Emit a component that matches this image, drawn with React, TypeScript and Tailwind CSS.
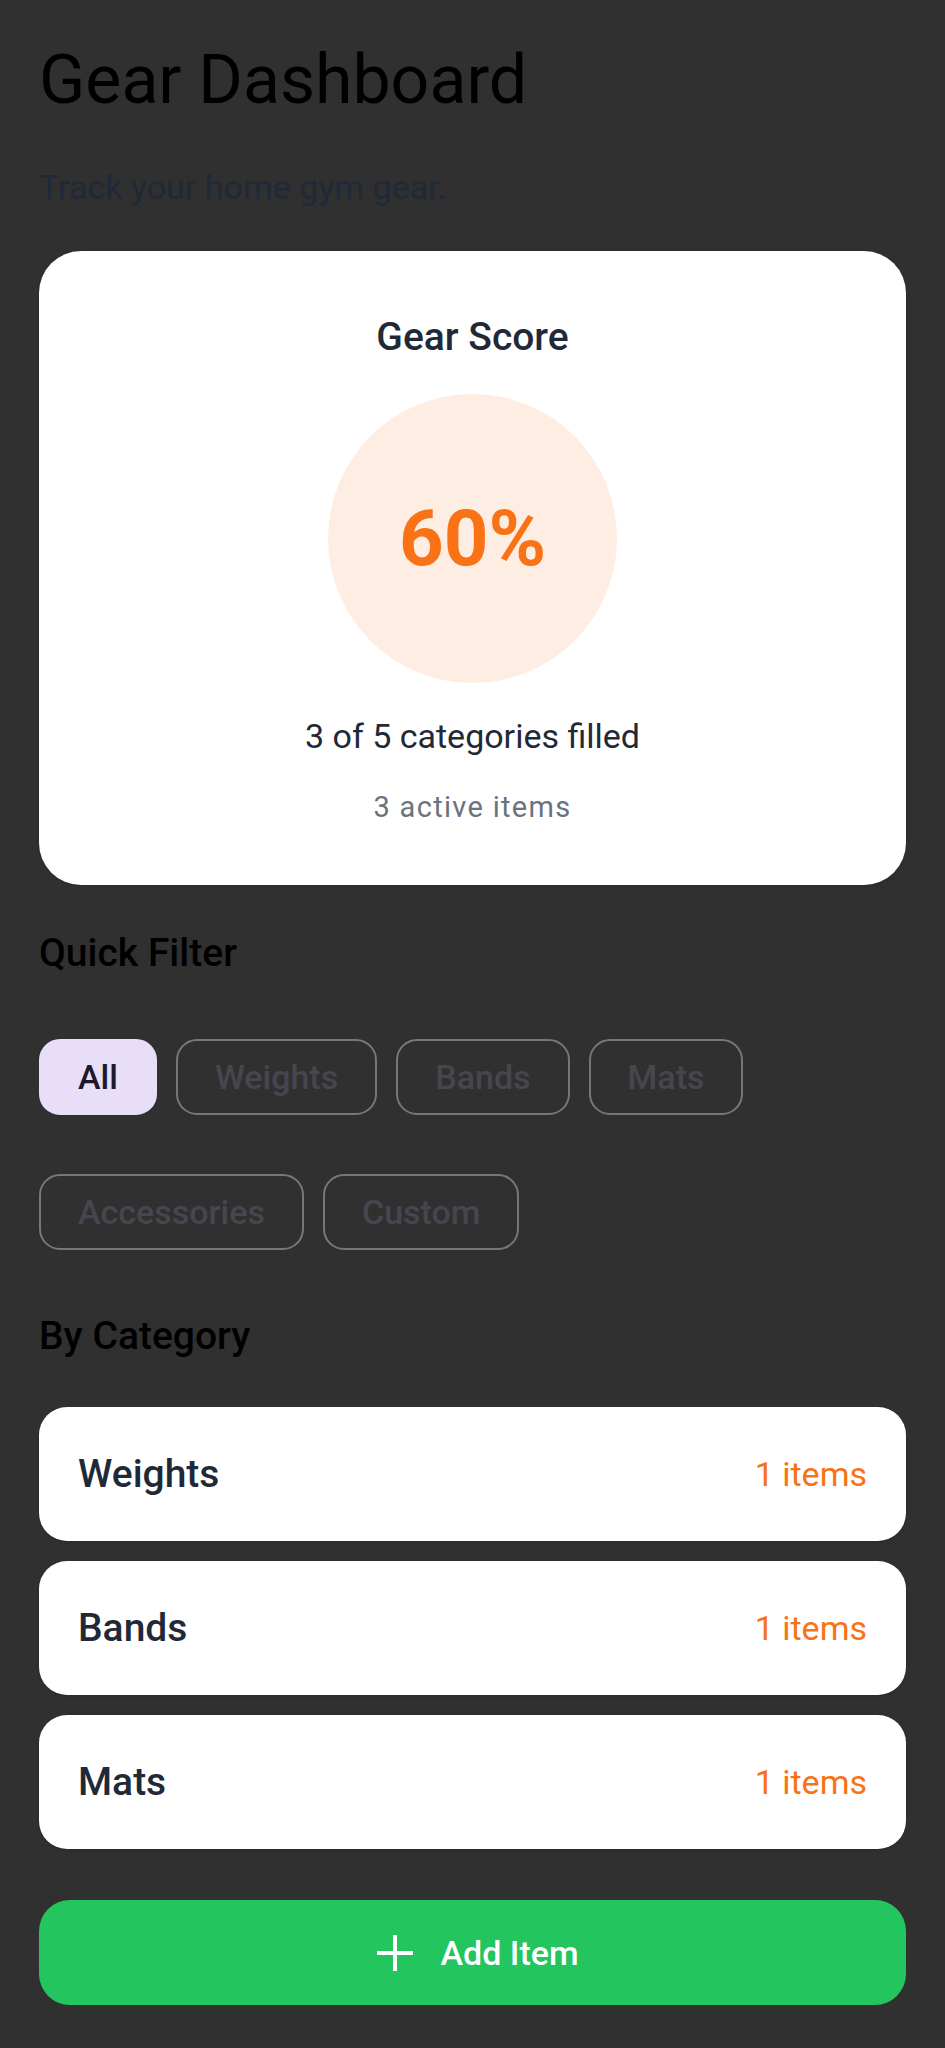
const filters = ["All", "Weights", "Bands", "Mats", "Accessories", "Custom"];

const categories = [
  { name: "Weights", count: 1 },
  { name: "Bands", count: 1 },
  { name: "Mats", count: 1 },
];

function Chip({ label, selected }: { label: string; selected: boolean }) {
  return (
    <button
      className={
        selected
          ? "h-[76px] px-[37px] rounded-[21px] border-2 border-[#e8def8] bg-[#e8def8] text-[#1d192b] text-[34px] font-medium leading-[40px]"
          : "h-[76px] px-[37px] rounded-[21px] border-2 border-[#79747e] bg-transparent text-[#49454f] text-[34px] font-medium leading-[40px]"
      }
    >
      {label}
    </button>
  );
}

export default function App() {
  const active = "All";

  return (
    <div className="min-h-screen bg-[#303030] px-[39px] pt-[40px] pb-[44px] font-['Roboto',sans-serif]">
      <h1 className="text-[68px] leading-[80px] font-normal text-black">Gear Dashboard</h1>
      <p className="mt-[47px] text-[34px] leading-[40px] text-[#1f2937]">Track your home gym gear.</p>

      <section className="mt-[44px] flex flex-col items-center rounded-[42px] bg-white pt-[63px] pb-[61px] shadow-sm">
        <h2 className="text-[39px] leading-[46px] font-medium text-[#1f2937]">Gear Score</h2>
        <div className="mt-[34px] flex h-[289px] w-[289px] items-center justify-center rounded-full bg-[#feede2]">
          <span className="text-[78px] leading-none font-bold text-[#f97316]">60%</span>
        </div>
        <p className="mt-[33px] text-[34px] leading-[40px] text-[#1f2937]">3 of 5 categories filled</p>
        <p className="mt-[34px] text-[29px] leading-[34px] tracking-[1.3px] text-[#6b7280]">3 active items</p>
      </section>

      <h3 className="mt-[45px] text-[39px] leading-[46px] font-medium text-black">Quick Filter</h3>
      <div className="mt-[63px] flex flex-wrap gap-x-[19px] gap-y-[59px]">
        {filters.map((f) => (
          <Chip key={f} label={f} selected={f === active} />
        ))}
      </div>

      <h3 className="mt-[63px] text-[39px] leading-[46px] font-medium text-black">By Category</h3>
      <div className="mt-[48px] flex flex-col gap-[20px]">
        {categories.map((c) => (
          <div
            key={c.name}
            className="flex h-[134px] items-center justify-between rounded-[28px] bg-white px-[39px] shadow-sm"
          >
            <span className="text-[39px] leading-[46px] font-medium text-[#1f2937]">{c.name}</span>
            <span className="text-[34px] leading-[40px] text-[#f97316]">{c.count} items</span>
          </div>
        ))}
      </div>

      <button className="mt-[51px] flex h-[105px] w-full items-center justify-center gap-[27px] rounded-[31px] bg-[#22c55e] pl-[11px] text-white">
        <svg width="36" height="36" viewBox="0 0 36 36" fill="none" stroke="currentColor" strokeWidth="4">
          <path d="M18 0v36M0 18h36" />
        </svg>
        <span className="text-[34px] leading-[40px] font-medium">Add Item</span>
      </button>
    </div>
  );
}
